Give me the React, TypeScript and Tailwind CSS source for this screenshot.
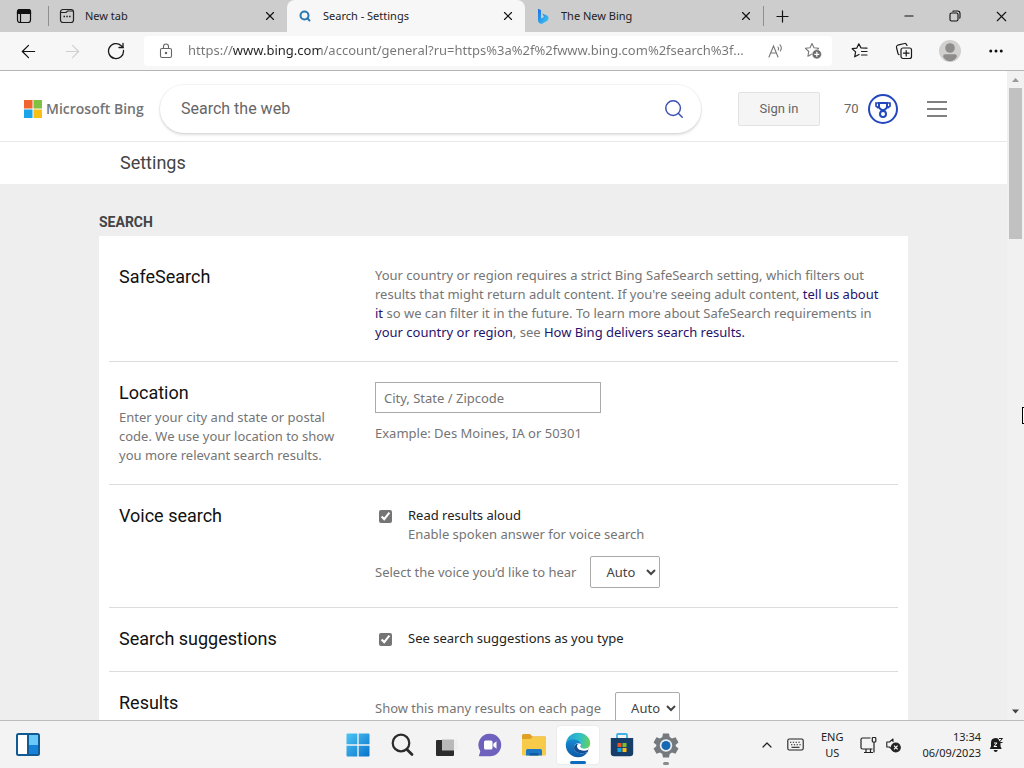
import { useState } from "react";
import type { ReactNode } from "react";
import { ArrowLeft, ArrowRight, ChevronUp, Minus, MoreHorizontal, Plus, Search, X } from "lucide-react";

const tabs = [
  { title: "New tab", icon: <NewTabIcon />, active: false },
  { title: "Search - Settings", icon: <Search size={12} strokeWidth={4} color="#2a7ab0" />, active: true },
  { title: "The New Bing", icon: <BingIcon />, active: false },
];

const taskbarApps = [
  { label: "Start", icon: <StartIcon /> },
  { label: "Search", icon: <TaskSearchIcon /> },
  { label: "Task view", icon: <TaskViewIcon /> },
  { label: "Chat", icon: <ChatIcon /> },
  { label: "File Explorer", icon: <FolderIcon /> },
  { label: "Edge", icon: <EdgeIcon />, active: true },
  { label: "Store", icon: <StoreIcon /> },
  { label: "Settings", icon: <GearIcon />, running: true },
];

function TabActionsIcon() {
  return (
    <svg width="16" height="16" viewBox="0 0 16 16" fill="none" stroke="#111" strokeWidth="1.2">
      <rect x="1.5" y="1.5" width="13" height="13" rx="2.5" />
      <path d="M1.5 3.5a2 2 0 0 1 2-2h9a2 2 0 0 1 2 2v2h-13z" fill="#111" />
      <path d="M4.5 5v9.5" />
    </svg>
  );
}

function NewTabIcon() {
  return (
    <svg width="16" height="16" viewBox="0 0 16 16" fill="none" stroke="#222" strokeWidth="1.2">
      <rect x="1.5" y="1.5" width="13" height="13" rx="2.5" />
      <path d="M1.5 4.5h5.5l1.5-1.5h6" />
      <path d="M4.5 8.5h1.5M7.3 8.5h1.5M10.1 8.5h1.5" strokeWidth="1.5" />
    </svg>
  );
}

function BingIcon() {
  return (
    <svg width="12" height="16" viewBox="0 0 12 16">
      <defs>
        <linearGradient id="bing" x1="0" y1="0" x2="1" y2="1">
          <stop offset="0" stopColor="#1b6fe0" />
          <stop offset="1" stopColor="#3ccdf5" />
        </linearGradient>
      </defs>
      <path d="M1 .8l3 1.2v8.600l3-1.600-1.800-3.600 4.300 1.800c1.600.7 2 1.700 2 3 0 1.300-.7 2.200-2 3l-3.800 2.300c-1.700.9-4.700-.4-4.700-3z" fill="url(#bing)" />
    </svg>
  );
}

function RefreshIcon() {
  return (
    <svg width="18" height="18" viewBox="0 0 18 18" fill="none" stroke="#1a1a1a" strokeWidth="1.3" strokeLinecap="round">
      <path d="M16.500 8.500a7.500 7.500 0 1 1-2.300-4.800l1.800 1.800" />
      <path d="M16 1.500v4h-4" />
    </svg>
  );
}

function LockIcon() {
  return (
    <svg width="14" height="16" viewBox="0 0 14 16" fill="none" stroke="#666" strokeWidth="1.1">
      <rect x="1.500" y="5.500" width="11" height="9" rx="1.500" />
      <path d="M4.500 5.500v-2a2.500 2.500 0 0 1 5 0v2" />
      <circle cx="7" cy="10" r=".7" fill="#666" />
    </svg>
  );
}

function ReadAloudIcon() {
  return (
    <svg width="16" height="16" viewBox="0 0 16 16" fill="none" stroke="#777" strokeWidth="1.1" strokeLinecap="round">
      <path d="M1 14L5.500 3 10 14M2.700 10h5.600" />
      <path d="M10 4q1 1.500.3 3M12 1.800q2.500 3 .3 6.200" />
    </svg>
  );
}

function AddFavoriteIcon() {
  return (
    <svg width="18" height="18" viewBox="0 0 18 18" fill="none">
      <path
        d="M8 1.500l2 4.300 4.600.5-3.400 3.200.9 4.700L8 11.900l-4.100 2.300.9-4.700L1.400 6.300 6 5.800z"
        stroke="#777"
        strokeWidth="1.1"
        strokeLinejoin="round"
      />
      <circle cx="12.800" cy="12.300" r="4.700" fill="#6b6b6b" stroke="#fff" strokeWidth=".6" />
      <path d="M10.300 12.300h5M12.800 9.800v5" stroke="#fff" strokeWidth="1.200" />
    </svg>
  );
}

function FavoritesIcon() {
  return (
    <svg width="18" height="18" viewBox="0 0 18 18" fill="none" stroke="#1a1a1a" strokeWidth="1.200" strokeLinejoin="round" strokeLinecap="round">
      <path d="M16 6.200L10 5.900 7.800 1.800 5.700 6.200 1.200 6.700 4.600 9.900 3.700 14.800 8 12.500" />
      <path d="M10.500 9.500H16M10.500 13H16" />
    </svg>
  );
}

function CollectionsIcon() {
  return (
    <svg width="18" height="18" viewBox="0 0 18 18" fill="none" stroke="#1a1a1a" strokeWidth="1.200" strokeLinecap="round">
      <rect x="6" y="6" width="10.500" height="10.500" rx="2" />
      <path d="M11.200 8.500v5.500M8.500 11.200H14" />
      <path d="M4 12.700Q3.300 12.500 3 11.500L1.500 5.500Q1 3.800 2.700 3.200L9.500 1.500Q11.200 1 12 3.500" />
    </svg>
  );
}

function ProfileIcon() {
  return (
    <svg width="22" height="22" viewBox="0 0 22 22">
      <circle cx="11" cy="11" r="11" fill="#d2d0ce" />
      <circle cx="11" cy="8" r="4.800" fill="#8f8d8b" />
      <path d="M4 16.500q0-2.300 2.300-2.300h9.400q2.300 0 2.300 2.300-2.500 4.700-7 4.700t-7-4.700z" fill="#8f8d8b" />
    </svg>
  );
}

function RestoreIcon() {
  return (
    <svg width="12" height="12" viewBox="0 0 12 12" fill="none" stroke="#111" strokeWidth="1.1">
      <rect x="1" y="3" width="8" height="8" rx="1.500" />
      <path d="M3.500 1.500Q4 1 5 1h3.500Q11 1 11 3.500V7q0 1-.5 1.500" />
    </svg>
  );
}

function MicrosoftLogo() {
  return (
    <svg width="18" height="18" viewBox="0 0 19 19">
      <path d="M0 0h9v9H0z" fill="#f0652f" />
      <path d="M10 0h9v9h-9z" fill="#7fc241" />
      <path d="M0 10h9v9H0z" fill="#1ba5e8" />
      <path d="M10 10h9v9h-9z" fill="#f9c013" />
    </svg>
  );
}

function RewardsIcon() {
  return (
    <svg width="30" height="30" viewBox="0 0 30 30" fill="none" stroke="#2348be">
      <circle cx="15" cy="15" r="14" strokeWidth="2" />
      <path d="M11 9h8v4.500L16.500 16h-3L11 13.500z" strokeWidth="2" />
      <path d="M11 9H8v3l2.500 2M19 9h3v3l-2.500 2" strokeWidth="1.700" />
      <circle cx="15" cy="20" r="3" strokeWidth="2" />
    </svg>
  );
}

function MenuIcon() {
  return (
    <svg width="20" height="16" viewBox="0 0 20 16" fill="#808080">
      <path d="M0 0h20v2H0zM0 7h20v2H0zM0 14h20v2H0z" />
    </svg>
  );
}

function WidgetsIcon() {
  return (
    <svg width="24" height="23" viewBox="0 0 24 23">
      <rect x="1" y="1" width="22" height="21" rx="1.500" fill="#fff" stroke="#125a94" strokeWidth="2" />
      <path d="M12 2h10v11H12z" fill="#69c9f8" />
      <path d="M12 12h10v9H12z" fill="#1681d6" />
      <path d="M12 1v21" stroke="#125a94" strokeWidth="2" />
    </svg>
  );
}

function StartIcon() {
  return (
    <svg width="24" height="24" viewBox="0 0 24 24">
      <defs>
        <linearGradient id="start" x1="0" y1="0" x2="1" y2="1">
          <stop offset="0" stopColor="#4cc5f5" />
          <stop offset="1" stopColor="#0873cb" />
        </linearGradient>
      </defs>
      <path d="M1.500.5h9.800v10.800H.5V1.500q0-1 1-1zM12.700.5h9.800q1 0 1 1v9.800H12.700zM.5 12.700h10.800v10.800H1.500q-1 0-1-1zM12.700 12.700h10.800v9.800q0 1-1 1h-9.800z" fill="url(#start)" />
    </svg>
  );
}

function TaskSearchIcon() {
  return (
    <svg width="24" height="24" viewBox="0 0 24 24" fill="none" stroke="#2b2b2b" strokeLinecap="round">
      <circle cx="11" cy="10" r="8.300" strokeWidth="2.200" />
      <path d="M17 16.500l5 5" strokeWidth="2.800" />
    </svg>
  );
}

function TaskViewIcon() {
  return (
    <svg width="24" height="24" viewBox="0 0 24 24">
      <rect x="2" y="7" width="18" height="16" rx="1" fill="#2c2c2c" />
      <rect x="8" y="6.500" width="12" height="11" fill="#b9b9b9" />
      <path d="M20 6.500h4v11h-4z" fill="#eee" />
    </svg>
  );
}

function ChatIcon() {
  return (
    <svg width="24" height="24" viewBox="0 0 24 24">
      <path d="M12 .8A11.200 11.200 0 0 1 12 23.200H1.500q-1-.6-.2-1.500l1-3.500A11.200 11.200 0 0 1 12 .8z" fill="#6d61bd" />
      <rect x="6" y="7.500" width="8.500" height="9" rx="1.500" fill="#fff" />
      <path d="M15.300 10.700l3.200-2.500v7.600l-3.200-2.500z" fill="#fff" />
    </svg>
  );
}

function FolderIcon() {
  return (
    <svg width="26" height="24" viewBox="0 0 26 24">
      <path d="M1 2.500Q1 1 2.500 1H9l2.500 2.500H24q1 0 1 1.300V21H1z" fill="#dfa023" />
      <path d="M1 6h8.500L12 3.500h11.700Q25 3.500 25 5v16.500q0 1-1 1H2q-1 0-1-1z" fill="#f8ca4a" />
      <path d="M5 22.500v-5q0-1.500 1.500-1.500h13q1.500 0 1.500 1.500v5z" fill="#1c78c7" />
      <path d="M8.500 22.500V20h9v2.500z" fill="#105a9f" />
    </svg>
  );
}

function EdgeIcon() {
  return (
    <svg width="26" height="26" viewBox="0 0 26 26">
      <defs>
        <linearGradient id="edgeTop" x1="0" y1=".4" x2="1" y2=".5">
          <stop offset="0" stopColor="#229fda" />
          <stop offset=".6" stopColor="#31c3c3" />
          <stop offset="1" stopColor="#69d055" />
        </linearGradient>
        <linearGradient id="edgeBottom" x1="0" y1="0" x2="0" y2="1">
          <stop offset="0" stopColor="#168ad2" />
          <stop offset="1" stopColor="#0c59a4" />
        </linearGradient>
      </defs>
      <path d="M.8 13C1 5.500 6.500.8 13 .8c7 0 12.200 5 12.200 10.200 0 4-3 6-6 6-3.500 0-4.500-1.300-3.700-2.500 1-1.500.5-5.500-4.500-5.500C6 9 1 11 .8 13z" fill="url(#edgeTop)" />
      <path d="M.8 13C1 9.500 4.500 7.500 8.300 7.500c5 0 7.700 2.500 7.700 5-4-3-7 0-7 3.500 0 4.500 7 7 13.700 4C20.500 23.500 17 25.200 13 25.200 6 25.200.8 19.700.8 13z" fill="url(#edgeBottom)" />
      <path d="M9 16c0-3.500 3-5.500 6.500-3.500 1 2-.9 2.500 0 3.500 2 2 6 1.300 8.500-.5l-1.300 4.500C16 23 9 20.500 9 16z" fill="#124e91" />
      <path d="M15.800 12c.3 1.500-.8 2-.3 3 1 2.500 6 2 9 .3l-1.200 2.500C18 20 12 18 12 14c0-1.500 1.500-2.700 3.800-2z" fill="#fff" />
    </svg>
  );
}

function StoreIcon() {
  return (
    <svg width="24" height="24" viewBox="0 0 24 24">
      <path d="M7 6V2q0-1 1-1h8q1 0 1 1v4" fill="none" stroke="#41b1e4" strokeWidth="1.800" />
      <path d="M.8 5h22.400v15q0 3.300-3.300 3.300H4.100Q.8 23.300.8 20z" fill="#173e68" />
      <path d="M7.500 10h4v4h-4z" fill="#ee5325" />
      <path d="M12.500 10h4v4h-4z" fill="#83bb2e" />
      <path d="M7.500 15h4v4h-4z" fill="#16a6e8" />
      <path d="M12.500 15h4v4h-4z" fill="#fbba18" />
    </svg>
  );
}

function GearIcon() {
  return (
    <svg width="26" height="26" viewBox="0 0 26 26">
      <path
        d="M10 1.500h6l.7 3.600 2.300 1.300 3.500-1.200 3 5.200-2.800 2.400v1.400l2.800 2.400-3 5.200-3.500-1.200-2.300 1.300-.7 3.600h-6l-.7-3.600L7 20.600l-3.500 1.200-3-5.200 2.800-2.400v-1.400L.5 10.400l3-5.200L7 6.400l2.300-1.300z"
        fill="#74797d"
      />
      <circle cx="13" cy="13.500" r="6.200" fill="#e8eef2" />
      <circle cx="13" cy="13.500" r="4.500" fill="#1668b3" />
    </svg>
  );
}

function KeyboardIcon() {
  return (
    <svg width="17" height="13" viewBox="0 0 17 13" fill="none" stroke="#222" strokeWidth="1.1">
      <rect x=".8" y="1" width="15.400" height="11" rx="1.500" />
      <path d="M3 4.200h11M4 6.700h10" strokeDasharray="1.300 1.500" />
      <path d="M4.500 9.300h8" />
    </svg>
  );
}

function NetworkIcon() {
  return (
    <svg width="17" height="18" viewBox="0 0 17 18" fill="none" stroke="#222" strokeWidth="1.200">
      <path d="M10.500 2H2.500Q1 2 1 3.500v8Q1 13 2.500 13h10M4 16.500h9M6 13v3.500M10.500 13v3.500" />
      <rect x="12.300" y="1.500" width="3.500" height="4.500" rx=".8" />
      <path d="M14 6v10.500" />
    </svg>
  );
}

function MutedIcon() {
  return (
    <svg width="16" height="16" viewBox="0 0 16 16" fill="none" stroke="#222" strokeWidth="1.100">
      <path d="M8 5V2L4.500 5H1.800v5h2.700L6 11.500" strokeLinejoin="round" />
      <circle cx="10.800" cy="10.500" r="4.500" fill="#222" />
      <path d="M9 8.700l3.600 3.600M12.600 8.700L9 12.300" stroke="#fff" strokeWidth="1.200" />
    </svg>
  );
}

function QuietBellIcon() {
  return (
    <svg width="15" height="16" viewBox="0 0 15 16" fill="none">
      <path d="M6.500 1A4.800 4.800 0 0 0 2 5.800v3.500L.8 12h11.900l-1.200-2.700V6L9 1.500z" fill="#1c1c1c" />
      <path d="M4.500 13h4.300q-.5 2-2.100 2t-2.200-2z" fill="#1c1c1c" />
      <path d="M5 6h3L5 9.500h3" stroke="#fff" />
      <path d="M10 1.500h3.500l-3.500 4h3.500" stroke="#1c1c1c" />
    </svg>
  );
}

function TabStrip() {
  return (
    <div className="flex h-8 shrink-0 bg-[#cdcdcd] text-[11px] text-[#222]">
      <button aria-label="Tab actions" className="flex w-12 shrink-0 items-center justify-center">
        <TabActionsIcon />
      </button>
      <div className="my-1.5 w-px shrink-0 bg-[#8f8f8f]" />
      <div className="flex min-w-0 flex-1">
        {tabs.map((tab) => (
          <div
            key={tab.title}
            className={`flex max-w-[238px] min-w-0 flex-1 items-center px-2.5 ${
              tab.active ? "rounded-t-lg bg-[#f7f7f7]" : ""
            }`}
          >
            <button className="flex min-w-0 flex-1 items-center gap-2.5 text-left">
              <span className="flex w-4 shrink-0 justify-center">{tab.icon}</span>
              <span className="truncate">{tab.title}</span>
            </button>
            <button aria-label={`Close ${tab.title}`}>
              <X size={14} strokeWidth={2} color="#111" />
            </button>
          </div>
        ))}
        <div className="my-1.5 w-px bg-[#8f8f8f]" />
        <button aria-label="New tab" className="flex w-9 items-center justify-center">
          <Plus size={19} strokeWidth={1.5} color="#111" />
        </button>
      </div>
      <button aria-label="Minimize" className="flex w-[46px] items-center justify-center">
        <Minus size={14} strokeWidth={1.8} color="#111" />
      </button>
      <button aria-label="Restore" className="flex w-[46px] items-center justify-center">
        <RestoreIcon />
      </button>
      <button aria-label="Close window" className="flex w-[46px] items-center justify-center">
        <X size={17} strokeWidth={1.5} color="#111" />
      </button>
    </div>
  );
}

function Toolbar() {
  const [url, setUrl] = useState(
    "https://www.bing.com/account/general?ru=https%3a%2f%2fwww.bing.com%2fsearch%3f..."
  );

  return (
    <div className="flex h-[39px] shrink-0 items-center border-b border-[#b5b5b5] bg-[#f7f7f7] pl-1.5">
      <button aria-label="Back" className="flex w-11 justify-center">
        <ArrowLeft size={21} strokeWidth={1.4} color="#111" />
      </button>
      <button aria-label="Forward" className="flex w-11 justify-center">
        <ArrowRight size={21} strokeWidth={1.4} color="#d0d0d0" />
      </button>
      <button aria-label="Refresh" className="flex w-11 justify-center">
        <RefreshIcon />
      </button>
      <div className="ml-1.5 flex h-[30px] min-w-0 flex-1 items-center rounded-sm bg-white pr-2.5 pl-[15px]">
        <LockIcon />
        <input
          aria-label="Address"
          value={url}
          onChange={(e) => setUrl(e.target.value)}
          className="ml-[15px] min-w-0 flex-1 bg-[linear-gradient(90deg,#757575_44px,#222_44px,#222_133px,#757575_133px)] bg-clip-text text-[13px] text-transparent outline-none"
        />
        <button aria-label="Read aloud" className="ml-3">
          <ReadAloudIcon />
        </button>
        <button aria-label="Add to favorites" className="ml-5">
          <AddFavoriteIcon />
        </button>
      </div>
      <button aria-label="Favorites" className="ml-1.5 flex w-11 justify-center">
        <FavoritesIcon />
      </button>
      <button aria-label="Collections" className="flex w-11 justify-center">
        <CollectionsIcon />
      </button>
      <button aria-label="Profile" className="flex w-12 justify-center">
        <ProfileIcon />
      </button>
      <button aria-label="More" className="mr-1.5 flex w-11 justify-center">
        <MoreHorizontal size={18} strokeWidth={2} color="#111" />
      </button>
    </div>
  );
}

function SiteHeader() {
  return (
    <header className="flex h-[71px] items-center border-b border-[#e8e8e8] bg-white pt-1.5 pl-6 font-[Roboto,sans-serif]">
      <a
        href="#home"
        className="flex w-[136px] shrink-0 items-center gap-1 font-['Open_Sans',sans-serif] text-sm font-semibold text-[#737373]"
      >
        <MicrosoftLogo />
        <span className="whitespace-nowrap">Microsoft Bing</span>
      </a>
      <form
        onSubmit={(e) => e.preventDefault()}
        className="flex h-12 max-w-[541px] min-w-0 flex-1 items-center rounded-full bg-white pr-4 pl-[21px] shadow-[0_0_1px_1px_rgba(0,0,0,0.05),0_2px_3px_rgba(0,0,0,0.12)]"
      >
        <input
          aria-label="Search the web"
          placeholder="Search the web"
          className="min-w-0 flex-1 text-base outline-none placeholder:text-[#666]"
        />
        <button aria-label="Search">
          <Search size={22} strokeWidth={1.6} color="#3a4fb0" />
        </button>
      </form>
      <button className="ml-[37px] h-[34px] w-[82px] shrink-0 rounded-xs border border-[#e2e2e2] bg-[#f5f5f5] text-[13px] text-[#666]">
        Sign in
      </button>
      <a href="#rewards" className="ml-6 flex shrink-0 items-center gap-[9px] text-[13px] text-[#666]">
        70
        <RewardsIcon />
      </a>
      <button aria-label="Menu" className="ml-[29px]">
        <MenuIcon />
      </button>
    </header>
  );
}

function SettingRow({
  title,
  description,
  children,
}: {
  title: string;
  description?: string;
  children: ReactNode;
}) {
  return (
    <section className="flex border-b border-[#dcdcdc] px-2.5 pt-5 pb-[19px]">
      <div className="w-64 shrink-0 pr-8">
        <h3 className="font-[Roboto,sans-serif] text-lg leading-[22px] text-[#111]">{title}</h3>
        {description && <p className="mt-1">{description}</p>}
      </div>
      <div className="min-w-0 flex-1">{children}</div>
    </section>
  );
}

function Checkbox({ id, label, hint }: { id: string; label: string; hint?: string }) {
  return (
    <div className="flex items-start pt-px pb-1 pl-1">
      <input id={id} type="checkbox" defaultChecked className="mt-1 size-[13px] accent-[#757575]" />
      <div className="ml-4">
        <label htmlFor={id} className="block text-[#222]">
          {label}
        </label>
        {hint && <p>{hint}</p>}
      </div>
    </div>
  );
}

function SelectField({ id, label, wide }: { id: string; label: string; wide?: boolean }) {
  return (
    <div className="flex items-center gap-3.5">
      <label htmlFor={id}>{label}</label>
      <select
        id={id}
        className={`h-8 rounded-xs border border-[#aaa] bg-white pl-[11px] text-[#444] ${wide ? "w-[70px]" : "w-[65px]"}`}
      >
        <option>Auto</option>
      </select>
    </div>
  );
}

const linkClass = "text-[#26126b] hover:underline";

function Settings() {
  return (
    <main className="min-h-0 min-w-0 flex-1 overflow-hidden bg-[#eee]">
      <SiteHeader />
      <div className="bg-white">
        <h1 className="mx-auto max-w-[809px] px-[21px] py-[9px] font-[Roboto,sans-serif] text-lg leading-6 text-[#444]">
          Settings
        </h1>
      </div>
      <div className="mx-auto max-w-[809px] pt-7">
        <h2 className="mb-1 font-[Roboto,sans-serif] text-sm leading-5 font-bold text-[#444]">SEARCH</h2>
        <div className="bg-white p-2.5 text-[13px] leading-[19px] text-[#757575]">
          <SettingRow title="SafeSearch">
            <p>
              Your country or region requires a strict Bing SafeSearch setting, which filters out results that might
              return adult content. If you're seeing adult content,{" "}
              <a href="#report" className={linkClass}>tell us about it</a> so we can filter it in the future. To learn
              more about SafeSearch requirements in{" "}
              <a href="#region" className={linkClass}>your country or region</a>, see{" "}
              <a href="#results" className={linkClass}>How Bing delivers search results.</a>
            </p>
          </SettingRow>
          <SettingRow
            title="Location"
            description="Enter your city and state or postal code. We use your location to show you more relevant search results."
          >
            <input
              aria-label="Location"
              placeholder="City, State / Zipcode"
              className="mb-[11px] block h-[31px] w-[226px] border border-[#aaa] px-2 placeholder:text-[#757575]"
            />
            <p>Example: Des Moines, IA or 50301</p>
          </SettingRow>
          <SettingRow title="Voice search">
            <Checkbox id="read-aloud" label="Read results aloud" hint="Enable spoken answer for voice search" />
            <div className="mt-2">
              <SelectField id="voice" label="Select the voice you’d like to hear" wide />
            </div>
          </SettingRow>
          <SettingRow title="Search suggestions">
            <Checkbox id="suggestions" label="See search suggestions as you type" />
          </SettingRow>
          <SettingRow title="Results">
            <SelectField id="count" label="Show this many results on each page" />
          </SettingRow>
        </div>
      </div>
    </main>
  );
}

function ScrollTrack() {
  return (
    <div className="flex w-[17px] shrink-0 flex-col items-center bg-[#f1f1f1]">
      <svg width="7" height="17" viewBox="0 0 7 17">
        <path d="M0 11l3.500-4L7 11z" fill="#999" />
      </svg>
      <div className="h-[151px] w-[13px] bg-[#c1c1c1]" />
      <svg width="7" height="17" viewBox="0 0 7 17" className="mt-auto">
        <path d="M0 6.500l3.500 4 3.500-4z" fill="#444" />
      </svg>
    </div>
  );
}

function Taskbar() {
  return (
    <footer className="grid h-12 shrink-0 grid-cols-[1fr_auto_1fr] items-center border-t border-[#bcbcbc] bg-[#f3f3f3]">
      <button aria-label="Widgets" className="ml-4 w-6">
        <WidgetsIcon />
      </button>
      <div className="flex">
        {taskbarApps.map((app) => (
          <button
            key={app.label}
            aria-label={app.label}
            className={`relative flex h-10 w-11 items-center justify-center ${
              app.active ? "rounded border border-[#ececec] bg-white" : ""
            }`}
          >
            {app.icon}
            {app.active && <span className="absolute bottom-0 h-[3px] w-4 rounded-full bg-[#0f6cbd]" />}
            {app.running && <span className="absolute bottom-0 h-[3px] w-1.5 rounded-full bg-[#8a8a8a]" />}
          </button>
        ))}
      </div>
      <div className="flex items-center justify-end pr-5 text-[11px] leading-4 text-[#222]">
        <button aria-label="Show hidden icons" className="mr-3">
          <ChevronUp size={16} strokeWidth={1.8} />
        </button>
        <KeyboardIcon />
        <span className="mx-[17px] text-center">
          ENG
          <br />
          US
        </span>
        <NetworkIcon />
        <span className="ml-2">
          <MutedIcon />
        </span>
        <time className="mr-2 ml-[21px] text-right">
          13:34
          <br />
          06/09/2023
        </time>
        <QuietBellIcon />
      </div>
    </footer>
  );
}

export default function App() {
  return (
    <div className="relative flex h-screen flex-col overflow-hidden font-['Noto_Sans',sans-serif]">
      <TabStrip />
      <Toolbar />
      <div className="flex min-h-0 flex-1">
        <Settings />
        <ScrollTrack />
      </div>
      <Taskbar />
      {/* mouse pointer at the window edge */}
      <div className="absolute top-[407px] right-0 h-[17px] w-0.5 border-y border-l border-black bg-white" />
    </div>
  );
}
